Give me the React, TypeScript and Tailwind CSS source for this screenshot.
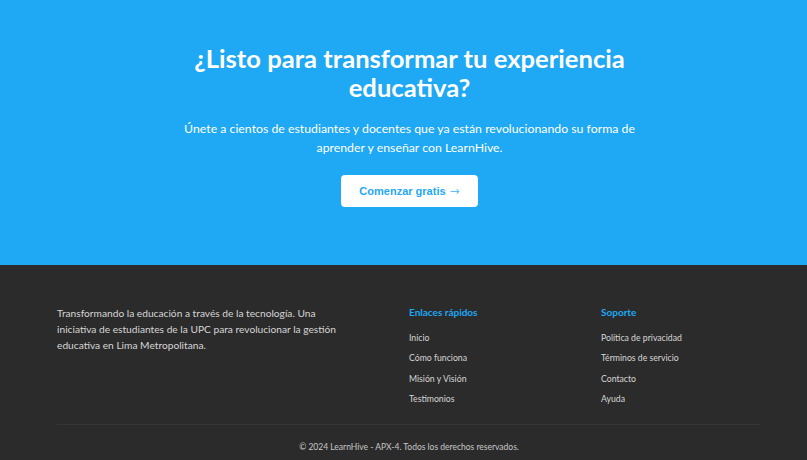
import React from "react";

export default function App() {
  const font = { fontFamily: 'Lato, "Open Sans", sans-serif' };
  return (
    <div className="w-[807px] h-[460px] overflow-hidden" style={font}>
      <section className="bg-[#1fa8f4] h-[265px] flex flex-col items-center pt-[44px]">
        <div className="ml-[12px] flex flex-col items-center text-center">
          <h2 className="text-white font-bold text-[25.6px] leading-[29px] w-[470px]">
            ¿Listo para transformar tu experiencia educativa?
          </h2>
          <p className="text-white text-[12.3px] leading-[19px] mt-[17px] w-[462px]">
            Únete a cientos de estudiantes y docentes que ya están revolucionando su forma de aprender y enseñar con LearnHive.
          </p>
          <button
            className="mt-[18px] bg-white rounded-[4px] w-[137px] h-[32px] text-[#1fa8f4] font-bold text-[11px] flex items-center justify-center gap-[4px]"
            style={{ fontFamily: '"Liberation Sans", Arial, sans-serif' }}
          >
            <span>Comenzar gratis</span>
            <span className="font-normal text-[12px] text-[#5fbff6]" style={{ fontFamily: '"DejaVu Sans", sans-serif' }}>→</span>
          </button>
        </div>
      </section>
      <footer className="bg-[#2b2b2b] h-[195px] pt-[40px]">
        <div className="ml-[57px] w-[704px]">
          <div className="grid grid-cols-[2fr_1fr_1fr] gap-8">
            <div>
              <p className="text-[#d6d6d6] text-[10.2px] leading-[16px] w-[290px]">
                Transformando la educación a través de la tecnología. Una iniciativa de estudiantes de la UPC para revolucionar la gestión educativa en Lima Metropolitana.
              </p>
            </div>
            <div>
              <h4 className="text-[#1fa8f4] text-[10px] font-bold leading-[14px]">Enlaces rápidos</h4>
              <ul className="mt-[12px] flex flex-col gap-[7px] text-[#d6d6d6] text-[8.7px] leading-[13.4px]">
                <li>Inicio</li>
                <li>Cómo funciona</li>
                <li>Misión y Visión</li>
                <li>Testimonios</li>
              </ul>
            </div>
            <div>
              <h4 className="text-[#1fa8f4] text-[10px] font-bold leading-[14px]">Soporte</h4>
              <ul className="mt-[12px] flex flex-col gap-[7px] text-[#d6d6d6] text-[8.7px] leading-[13.4px]">
                <li>Política de privacidad</li>
                <li>Términos de servicio</li>
                <li>Contacto</li>
                <li>Ayuda</li>
              </ul>
            </div>
          </div>
          <div className="mt-[18px] border-t border-[#363636]" />
          <p className="text-center text-[#c8c8c8] text-[8.5px] mt-[16px] leading-[13px]">
            © 2024 LearnHive - APX-4. Todos los derechos reservados.
          </p>
        </div>
      </footer>
    </div>
  );
}
